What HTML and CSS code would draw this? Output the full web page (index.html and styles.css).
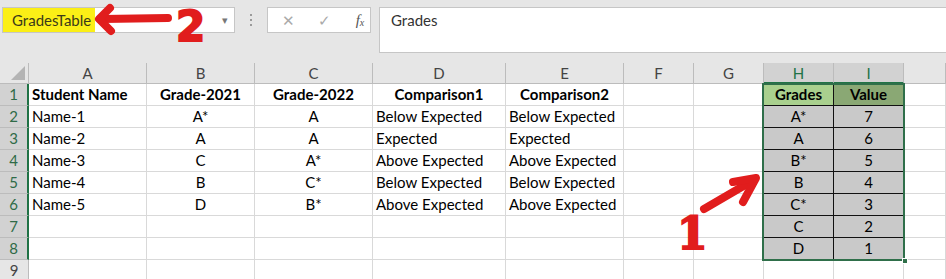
FILE: index.html
```html
<!DOCTYPE html>
<html lang="en">
<head>
    <meta charset="UTF-8">
    <title>GradesTable</title>
    <link rel="stylesheet" href="styles.css">
</head>
<body>
    <div class="toolbar">
        <div class="name-box">
            <span class="name-text">GradesTable</span>
            <span class="drop">&#9662;</span>
        </div>
        <div class="dots"><i></i><i></i><i></i></div>
        <div class="fx-buttons">
            <span class="btn">&#x2715;</span>
            <span class="btn">&#x2713;</span>
            <span class="btn fx">f<sub>x</sub></span>
        </div>
        <div class="formula">Grades</div>
    </div>

    <div class="sheet">
        <!-- column headers -->
        <div class="cell corner"><span class="tri"></span></div>
        <div class="cell col">A</div>
        <div class="cell col">B</div>
        <div class="cell col">C</div>
        <div class="cell col">D</div>
        <div class="cell col">E</div>
        <div class="cell col">F</div>
        <div class="cell col">G</div>
        <div class="cell col sel">H</div>
        <div class="cell col sel">I</div>
        <div class="cell col"></div>

        <div class="cell row sel">1</div>
        <div class="cell b">Student Name</div>
        <div class="cell b c">Grade-2021</div>
        <div class="cell b c">Grade-2022</div>
        <div class="cell b c">Comparison1</div>
        <div class="cell b c">Comparison2</div>
        <div class="cell"></div>
        <div class="cell"></div>
        <div class="cell tb th1">Grades</div>
        <div class="cell tb th2">Value</div>
        <div class="cell"></div>

        <div class="cell row sel">2</div>
        <div class="cell">Name-1</div>
        <div class="cell c">A*</div>
        <div class="cell c">A</div>
        <div class="cell">Below Expected</div>
        <div class="cell">Below Expected</div>
        <div class="cell"></div>
        <div class="cell"></div>
        <div class="cell tb">A*</div>
        <div class="cell tb">7</div>
        <div class="cell"></div>

        <div class="cell row sel">3</div>
        <div class="cell">Name-2</div>
        <div class="cell c">A</div>
        <div class="cell c">A</div>
        <div class="cell">Expected</div>
        <div class="cell">Expected</div>
        <div class="cell"></div>
        <div class="cell"></div>
        <div class="cell tb">A</div>
        <div class="cell tb">6</div>
        <div class="cell"></div>

        <div class="cell row sel">4</div>
        <div class="cell">Name-3</div>
        <div class="cell c">C</div>
        <div class="cell c">A*</div>
        <div class="cell">Above Expected</div>
        <div class="cell">Above Expected</div>
        <div class="cell"></div>
        <div class="cell"></div>
        <div class="cell tb">B*</div>
        <div class="cell tb">5</div>
        <div class="cell"></div>

        <div class="cell row sel">5</div>
        <div class="cell">Name-4</div>
        <div class="cell c">B</div>
        <div class="cell c">C*</div>
        <div class="cell">Below Expected</div>
        <div class="cell">Below Expected</div>
        <div class="cell"></div>
        <div class="cell"></div>
        <div class="cell tb">B</div>
        <div class="cell tb">4</div>
        <div class="cell"></div>

        <div class="cell row sel">6</div>
        <div class="cell">Name-5</div>
        <div class="cell c">D</div>
        <div class="cell c">B*</div>
        <div class="cell">Above Expected</div>
        <div class="cell">Above Expected</div>
        <div class="cell"></div>
        <div class="cell"></div>
        <div class="cell tb">C*</div>
        <div class="cell tb">3</div>
        <div class="cell"></div>

        <div class="cell row sel">7</div>
        <div class="cell"></div>
        <div class="cell"></div>
        <div class="cell"></div>
        <div class="cell"></div>
        <div class="cell"></div>
        <div class="cell"></div>
        <div class="cell"></div>
        <div class="cell tb">C</div>
        <div class="cell tb">2</div>
        <div class="cell"></div>

        <div class="cell row sel">8</div>
        <div class="cell"></div>
        <div class="cell"></div>
        <div class="cell"></div>
        <div class="cell"></div>
        <div class="cell"></div>
        <div class="cell"></div>
        <div class="cell"></div>
        <div class="cell tb">D</div>
        <div class="cell tb">1</div>
        <div class="cell"></div>

        <div class="cell row">9</div>
        <div class="cell"></div>
        <div class="cell"></div>
        <div class="cell"></div>
        <div class="cell"></div>
        <div class="cell"></div>
        <div class="cell"></div>
        <div class="cell"></div>
        <div class="cell"></div>
        <div class="cell"></div>
        <div class="cell"></div>
    </div>

    <!-- selection outline over H1:I8 -->
    <div class="selection"><span class="handle"></span></div>

    <!-- hand drawn notes -->
    <svg class="marks" width="946" height="279" viewBox="0 0 946 279">
        <g fill="none" stroke="#e11d1d" stroke-width="8" stroke-linecap="round" stroke-linejoin="round">
            <path d="M103 19 L168 18"/>
            <path d="M110 8 L99 19 L111 31"/>
            <path d="M704 209 L752 181"/>
            <path d="M733 182 L756 178 L743 202"/>
        </g>
    </svg>
    <span class="note note-2">2</span>
    <span class="note note-1">1</span>
</body>
</html>
```

FILE: styles.css
```css
* {
    margin: 0;
    padding: 0;
    box-sizing: border-box;
}

body {
    width: 946px;
    height: 279px;
    overflow: hidden;
    background: #e6e6e6;
    font-family: Lato, 'Liberation Sans', sans-serif;
    font-size: 15px;
    color: #000;
    position: relative;
}

/* formula bar */
.toolbar {
    height: 63px;
    display: flex;
    align-items: flex-start;
    padding: 7px 0 0 2px;
}

.name-box {
    width: 233px;
    height: 26px;
    background: #fff;
    border: 1px solid #c6c6c6;
    display: flex;
    align-items: center;
    justify-content: space-between;
}

.name-text {
    background: #fbef16;
    height: 24px;
    width: 92px;
    padding-left: 9px;
    line-height: 24px;
    color: #3a3a1a;
}

.drop {
    color: #777;
    font-size: 11px;
    margin-right: 6px;
}

.dots {
    width: 32px;
    height: 26px;
    display: flex;
    flex-direction: column;
    align-items: center;
    justify-content: center;
    gap: 3px;
}

.dots i {
    width: 2px;
    height: 2px;
    background: #9a9a9a;
}

.fx-buttons {
    width: 104px;
    height: 26px;
    background: #fff;
    border: 1px solid #c6c6c6;
    display: flex;
    align-items: center;
    padding-left: 12px;
    gap: 20px;
}

.btn {
    color: #aaa;
    font-size: 15px;
    width: 16px;
    text-align: center;
}

.fx {
    font-family: 'Liberation Serif', serif;
    font-style: italic;
    color: #555;
    font-size: 15px;
}

.fx sub {
    font-size: 10px;
    vertical-align: -1px;
}

.formula {
    margin-left: 8px;
    flex: 1;
    height: 46px;
    background: #fff;
    border: 1px solid #c6c6c6;
    border-right: none;
    padding: 3px 11px;
    color: #333;
}

/* grid */
.sheet {
    display: grid;
    grid-template-columns: 29px 118px 108px 118px 133px 118px 70px 70px 70px 70px 1fr;
    grid-template-rows: 21px repeat(9, 22px);
    background: #fff;
}

.cell {
    border-right: 1px solid #d9d9d9;
    border-bottom: 1px solid #d9d9d9;
    padding: 0 3px;
    line-height: 21px;
    white-space: nowrap;
    overflow: hidden;
}

.c {
    text-align: center;
}

.b {
    font-weight: 700;
}

.corner {
    background: #e6e6e6;
    border-color: #bcbcbc;
    position: relative;
}

.tri {
    position: absolute;
    right: 3px;
    bottom: 3px;
    width: 0;
    height: 0;
    border-left: 14px solid transparent;
    border-bottom: 14px solid #b4b4b4;
}

.col {
    background: #e6e6e6;
    border-color: #bcbcbc;
    color: #444;
    text-align: center;
    line-height: 20px;
}

.row {
    background: #e6e6e6;
    border-color: #bcbcbc;
    color: #444;
    text-align: center;
    padding: 0;
}

.col.sel {
    background: #d2d2d2;
    color: #217346;
    border-bottom: 2px solid #217346;
}

.row.sel {
    background: #d2d2d2;
    color: #2f6b47;
    border-right: 2px solid #217346;
}

.tb {
    background: #c9c9c9;
    border-right-color: #111;
    border-bottom-color: #111;
    text-align: center;
}

.th1 {
    background: #a9d08e;
    font-weight: 700;
}

.th2 {
    background: #8aa874;
    font-weight: 700;
}

/* overlays */
.selection {
    position: absolute;
    left: 762px;
    top: 83px;
    width: 143px;
    height: 178px;
    border: 2px solid #2f6f4a;
}

.handle {
    position: absolute;
    right: -5px;
    bottom: -5px;
    width: 6px;
    height: 6px;
    background: #2f6f4a;
    border: 1px solid #fff;
}

.marks {
    position: absolute;
    left: 0;
    top: 0;
    pointer-events: none;
}

.note {
    position: absolute;
    color: #e11d1d;
    font-weight: 700;
    line-height: 1;
    -webkit-text-stroke: 2px #e11d1d;
}

.note-2 {
    left: 176px;
    top: 6px;
    font-family: 'DejaVu Sans', sans-serif;
    font-size: 42px;
}

.note-1 {
    left: 677px;
    top: 212px;
    font-family: 'DejaVu Serif', serif;
    font-size: 44px;
}
```
